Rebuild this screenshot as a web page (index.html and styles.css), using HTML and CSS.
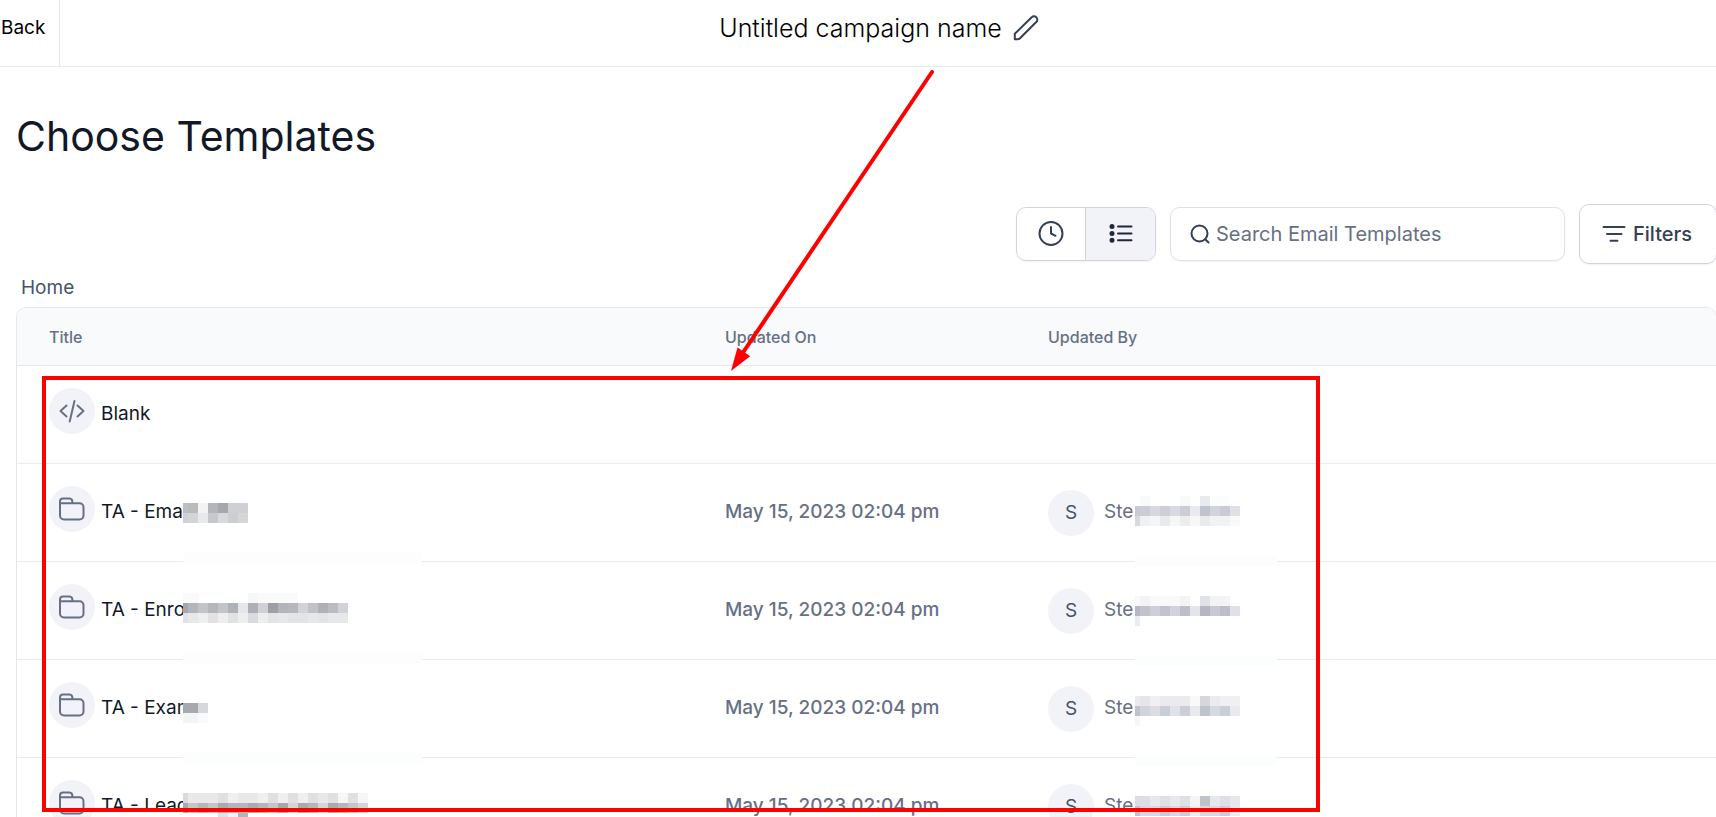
FILE: index.html
```html
<!DOCTYPE html>
<html lang="en">
<head>
<meta charset="utf-8">
<meta name="viewport" content="width=device-width, initial-scale=1">
<title>Choose Templates</title>
<link rel="stylesheet" href="styles.css">
</head>
<body>
<svg class="sprite" aria-hidden="true">
  <symbol id="folder" viewBox="0 0 28 28"><path d="M2 8.300V6.400A3 3 0 0 1 5 3.400h6.600a3 3 0 0 1 2.700 3L14.600 8.300M2 8.300H21.500a4 4 0 0 1 4 4V20.500a4 4 0 0 1-4 4H6a4 4 0 0 1-4-4Z"/></symbol>
</svg>

<header class="topbar">
  <a class="back" href="#">Back</a>
  <div class="campaign">
    <span>Untitled campaign name</span>
    <button class="edit" type="button" aria-label="Edit campaign name">
      <svg width="26" height="26" viewBox="0 0 26 26"><path d="M1.800 24.200V18.700L18.700 2.300a3 3 0 0 1 4.600 0a3.200 3.200 0 0 1 0 4.700L7 23.200Q6 24.200 4.600 24.200Z"/></svg>
    </button>
  </div>
</header>

<main class="page">
  <h1>Choose Templates</h1>

  <div class="toolbar">
    <div class="toggle">
      <button type="button" aria-label="Recent">
        <svg width="26" height="26" viewBox="0 0 26 26"><circle cx="13" cy="12.500" r="11.500"/><path d="M13 6V12.500L17.500 14.800"/></svg>
      </button>
      <button class="active" type="button" aria-label="List">
        <svg width="24" height="20" viewBox="0 0 24 20"><path d="M9 2.500H22.500M9 9.500H22.500M9 16.200H22.500"/><path class="dots" d="M3 2.500h.01M3 9.500h.01M3 16.200h.01"/></svg>
      </button>
    </div>
    <label class="search">
      <svg width="20" height="20" viewBox="0 0 20 20"><circle cx="9.500" cy="9.500" r="8"/><path d="M15.200 15.200L18.500 18.500"/></svg>
      <input type="search" placeholder="Search Email Templates" aria-label="Search Email Templates">
    </label>
    <button class="filters" type="button">
      <svg width="24" height="18" viewBox="0 0 24 18"><path d="M1.500 2H22.500M5 9H19.500M8.500 15.700H15.500"/></svg>
      Filters
    </button>
  </div>

  <nav class="crumbs"><a href="#">Home</a></nav>

  <table class="templates">
    <thead>
      <tr><th class="col-title">Title</th><th class="col-date">Updated On</th><th>Updated By</th></tr>
    </thead>
    <tbody>
      <tr>
        <td><div class="item"><span class="icon"><svg width="28" height="28" viewBox="0 0 28 28"><path d="M8.500 8.500L2.500 14L8.500 19.500M19.500 8.500L25.500 14L19.500 19.500M16.500 4L11.700 24.500"/></svg></span><span class="name">Blank</span></div></td>
        <td></td><td></td>
      </tr>
      <tr>
        <td><div class="item"><span class="icon"><svg width="28" height="28"><use href="#folder"/></svg></span><span class="name">TA - Ema</span></div>
          <svg class="mosaic" width="239" height="106"><path class="band" d="M0 94H239"/>
            <path stroke="#bdbec1" d="M0 44h5"/><path stroke="#b9babe" d="M5 44h10"/><path stroke="#f3f3f3" d="M15 44h10"/><path stroke="#b2b5ba" d="M25 44h10"/><path stroke="#a4a7ac" d="M35 44h10"/><path stroke="#cfd0d3" d="M45 44h20"/>
            <path stroke="#cfd0d3" d="M0 54h5"/><path stroke="#d3d4d8" d="M5 54h10"/><path stroke="#e8e9ec" d="M15 54h10"/><path stroke="#c7c8cc" d="M25 54h10"/><path stroke="#d8d9df" d="M35 54h10"/><path stroke="#cdced1" d="M45 54h10"/><path stroke="#d5d6d8" d="M55 54h10"/>
          </svg></td>
        <td>May 15, 2023 02:04 pm</td>
        <td><div class="user"><span class="avatar">S</span><span class="who">Ste</span></div>
          <svg class="mosaic right" width="142" height="106"><path class="band" d="M0 97H142"/>
            <path stroke="#f9f9fa" d="M5 37h10M45 37h10"/><path stroke="#e9eaee" d="M65 37h10"/><path stroke="#fbfcfc" d="M75 37h20"/>
            <path stroke="#c8cbd3" d="M0 47h5"/><path stroke="#cacdd5" d="M5 47h10M45 47h10"/><path stroke="#d5d8de" d="M15 47h10"/><path stroke="#cccfd6" d="M25 47h10"/><path stroke="#d7dae0" d="M35 47h10"/><path stroke="#e9eaef" d="M55 47h10"/><path stroke="#bfc3cc" d="M65 47h10"/><path stroke="#d1d4dc" d="M75 47h10"/><path stroke="#c8ccd5" d="M85 47h10"/><path stroke="#e0e1e6" d="M95 47h10"/>
            <path stroke="#d8d9df" d="M0 57h5"/><path stroke="#f0f1f3" d="M5 57h10"/><path stroke="#f5f5f7" d="M15 57h10"/><path stroke="#e9eaec" d="M25 57h10M65 57h10"/><path stroke="#f7f7f8" d="M35 57h10M55 57h10"/><path stroke="#ededef" d="M45 57h10"/><path stroke="#f2f2f5" d="M75 57h20"/><path stroke="#f9f9fa" d="M95 57h10"/>
          </svg></td>
      </tr>
      <tr>
        <td><div class="item"><span class="icon"><svg width="28" height="28"><use href="#folder"/></svg></span><span class="name">TA - Enro</span></div>
          <svg class="mosaic" width="239" height="106"><path class="band" d="M0 96H239"/>
            <path stroke="#fafafa" d="M0 36h15M75 36h40"/><path stroke="#f6f7f7" d="M65 36h10"/>
            <path stroke="#a5a7ae" d="M0 46h5"/><path stroke="#b2b5ba" d="M5 46h10"/><path stroke="#c1c3c8" d="M15 46h10"/><path stroke="#b5b6bc" d="M25 46h10"/><path stroke="#c1c4c8" d="M35 46h10"/><path stroke="#b0b2b9" d="M45 46h10"/><path stroke="#e5e6ea" d="M55 46h10"/><path stroke="#afb0b7" d="M65 46h10"/><path stroke="#d0d1d6" d="M75 46h10"/><path stroke="#9c9fa8" d="M85 46h10"/><path stroke="#b1b4b9" d="M95 46h10"/><path stroke="#b7b8be" d="M105 46h10"/><path stroke="#d1d3d8" d="M115 46h10"/><path stroke="#c0c2c7" d="M125 46h10"/><path stroke="#b0b1b7" d="M135 46h10"/><path stroke="#b9bbc1" d="M145 46h10"/><path stroke="#d1d2d8" d="M155 46h10"/>
            <path stroke="#e2e2e5" d="M0 56h5M25 56h10M45 56h10"/><path stroke="#e7e8ea" d="M5 56h10M95 56h10M125 56h10M145 56h20"/><path stroke="#eeeeef" d="M15 56h10M35 56h10M55 56h10M75 56h10"/><path stroke="#dadbde" d="M65 56h10"/><path stroke="#e3e4e6" d="M85 56h10M105 56h20M135 56h10"/>
          </svg></td>
        <td>May 15, 2023 02:04 pm</td>
        <td><div class="user"><span class="avatar">S</span><span class="who">Ste</span></div>
          <svg class="mosaic right" width="142" height="106"><path class="band" d="M0 99H142"/>
            <path stroke="#f9f9fa" d="M0 39h5M15 39h30"/><path stroke="#f3f3f5" d="M5 39h10M45 39h10M75 39h20"/><path stroke="#e1e2e7" d="M65 39h10"/>
            <path stroke="#b5b9c4" d="M0 49h5"/><path stroke="#c1c4cd" d="M5 49h10"/><path stroke="#cdd0d7" d="M15 49h10"/><path stroke="#c1c4ce" d="M25 49h10"/><path stroke="#d0d3db" d="M35 49h10"/><path stroke="#bbbfc9" d="M45 49h10M85 49h10"/><path stroke="#e3e5ea" d="M55 49h10"/><path stroke="#b3b7c3" d="M65 49h10"/><path stroke="#c7cad3" d="M75 49h10"/><path stroke="#dfe1e6" d="M95 49h10"/><path stroke="#ebecef" d="M0 59h5"/>
          </svg></td>
      </tr>
      <tr>
        <td><div class="item"><span class="icon"><svg width="28" height="28"><use href="#folder"/></svg></span><span class="name">TA - Exam</span></div>
          <svg class="mosaic" width="239" height="106"><path class="blank" d="M0 48H40"/><path class="band" d="M0 98H239"/>
            <path stroke="#a8a9b0" d="M0 48h15"/><path stroke="#d7d8dc" d="M15 48h10"/><path stroke="#f3f4f4" d="M0 58h15"/><path stroke="#fafafa" d="M15 58h10"/>
          </svg></td>
        <td>May 15, 2023 02:04 pm</td>
        <td><div class="user"><span class="avatar">S</span><span class="who">Ste</span></div>
          <svg class="mosaic right" width="142" height="106"><path class="band" d="M0 101H142"/>
            <path stroke="#ebebef" d="M0 41h5M25 41h30M75 41h10"/><path stroke="#e5e6ea" d="M5 41h10"/><path stroke="#f0f0f3" d="M15 41h10M85 41h20"/><path stroke="#f8f9f9" d="M55 41h10"/><path stroke="#d6d7dd" d="M65 41h10"/>
            <path stroke="#bec3cc" d="M0 51h5M65 51h10"/><path stroke="#d1d4dc" d="M5 51h10"/><path stroke="#dbdde3" d="M15 51h10"/><path stroke="#caced6" d="M25 51h10M45 51h10M85 51h10"/><path stroke="#e1e2e7" d="M35 51h10"/><path stroke="#e9eaef" d="M55 51h10M95 51h10"/><path stroke="#d7d9e0" d="M75 51h10"/><path stroke="#f7f7f8" d="M0 61h5"/>
          </svg></td>
      </tr>
      <tr>
        <td><div class="item"><span class="icon"><svg width="28" height="28"><use href="#folder"/></svg></span><span class="name">TA - Lead</span></div>
          <svg class="mosaic" width="239" height="90"><path class="blank" d="M0 48H40"/>
            <path stroke="#d9dadc" d="M0 40h5"/><path stroke="#e8e9ea" d="M5 40h30M55 40h20M135 40h10"/><path stroke="#dfe0e2" d="M35 40h10M85 40h10M105 40h10M125 40h10M145 40h10M165 40h10"/><path stroke="#efeff0" d="M45 40h10M75 40h10M95 40h10M115 40h10"/><path stroke="#f5f7f7" d="M155 40h10M175 40h10"/>
            <path stroke="#a6a8ae" d="M0 50h5M95 50h10"/><path stroke="#c3c5c9" d="M5 50h10M25 50h10M85 50h10M165 50h10"/><path stroke="#b5b6bb" d="M15 50h10M45 50h20M75 50h10M125 50h10M155 50h10"/><path stroke="#a9abb1" d="M35 50h10M65 50h10M115 50h10M145 50h10"/><path stroke="#d4d5d8" d="M105 50h10M135 50h10M175 50h10"/>
            <path stroke="#e2e2e4" d="M35 60h10"/><path stroke="#f2f2f3" d="M45 60h10"/><path stroke="#b5b6bb" d="M55 60h10"/>
          </svg></td>
        <td>May 15, 2023 02:04 pm</td>
        <td><div class="user"><span class="avatar">S</span><span class="who">Ste</span></div>
          <svg class="mosaic right" width="142" height="90">
            <path stroke="#dcdee3" d="M0 43h15"/><path stroke="#e7e8ec" d="M15 43h10M35 43h10M75 43h10M95 43h10"/><path stroke="#dfe0e5" d="M25 43h10M45 43h10M85 43h10"/><path stroke="#f2f4f6" d="M55 43h10"/><path stroke="#bdc2cb" d="M65 43h10"/>
            <path stroke="#bec3cc" d="M0 53h5"/><path stroke="#d7d9e0" d="M5 53h20M35 53h10M65 53h20"/><path stroke="#cacdd5" d="M25 53h10M45 53h10M85 53h10"/><path stroke="#ebecef" d="M55 53h10M95 53h10"/>
          </svg></td>
      </tr>
    </tbody>
  </table>
</main>

<svg class="annotation" width="1340" height="817" aria-hidden="true">
  <rect x="44" y="378" width="1274" height="432"/>
  <path d="M932 72L742 354"/>
  <path class="head" d="M731 371L737.500 347.500L750.200 356.300Z"/>
</svg>
</body>
</html>
```
FILE: styles.css
```css
* { box-sizing: border-box; }

body {
  position: relative;
  height: 100vh;
  margin: 0;
  overflow: hidden;
  background: #fff;
  color: #111827;
  font: 400 19px/24px Inter, sans-serif;
}

a { color: inherit; text-decoration: none; }

button {
  padding: 0;
  border: 0;
  background: none;
  color: inherit;
  font: inherit;
}

svg {
  display: block;
  flex: none;
  fill: none;
  stroke: currentColor;
  stroke-width: 2;
  stroke-linecap: round;
  stroke-linejoin: round;
}

.sprite { display: none; }

.topbar {
  display: flex;
  height: 67px;
  padding-bottom: 10px;
  border-bottom: 1px solid #eaebee;
  color: #000;
}

.back {
  width: 60px;
  height: 66px;
  padding: 16px 0 0 1px;
  border-right: 1px solid #e4e5ea;
}

.campaign {
  display: flex;
  flex: 1;
  align-items: center;
  justify-content: center;
  gap: 11px;
  padding-right: 18px;
  font-size: 25px;
  font-weight: 300;
  line-height: 32px;
}

.edit { color: #344054; }

.page { margin: 0 -1px 0 16px; }

h1 {
  margin: 0;
  padding-top: 45px;
  font-size: 41px;
  font-weight: 400;
  line-height: 48px;
}

.toolbar {
  display: flex;
  align-items: center;
  justify-content: flex-end;
  gap: 14px;
  margin-top: 44px;
  color: #344054;
}

.toggle {
  display: flex;
  width: 140px;
  height: 54px;
  overflow: hidden;
  border: 1px solid #d0d5dd;
  border-radius: 10px;
  box-shadow: 0 1px 2px #1018280d;
}

.toggle button {
  display: grid;
  flex: 1;
  place-items: center;
}

.toggle .active {
  border-left: 1px solid #d0d5dd;
  background: #f2f3f8;
  color: #1d2939;
}

.toggle .dots { stroke-width: 5; }

.search {
  display: flex;
  align-items: center;
  gap: 6px;
  width: 395px;
  height: 54px;
  padding: 0 19px;
  border: 1px solid #e0e1e6;
  border-radius: 10px;
  box-shadow: 0 1px 2px #1018280d;
}

.search input {
  flex: 1;
  min-width: 0;
  padding: 0;
  border: 0;
  outline: 0;
  background: none;
  font: inherit;
  font-size: 20px;
}

.search input::placeholder { color: #667085; }

.filters {
  display: flex;
  align-items: center;
  gap: 7px;
  height: 60px;
  padding: 0 24px 0 22px;
  border: 1px solid #d0d5dd;
  border-radius: 10px;
  box-shadow: 0 1px 2px #1018280d;
  font-size: 20px;
  font-weight: 500;
}

.crumbs {
  padding: 12px 5px 7px;
  color: #475467;
}

.templates {
  width: 100%;
  border: 1px solid #e6e7ec;
  border-radius: 10px 10px 0 0;
  border-spacing: 0;
  table-layout: fixed;
  color: #667085;
}

.col-title { width: 676px; }
.col-date { width: 323px; }

th {
  height: 58px;
  padding: 0 32px;
  border-bottom: 1px solid #e6e7ec;
  background: #f9fafc;
  font-size: 16px;
  font-weight: 500;
  text-align: left;
}

th:first-child { border-top-left-radius: 9px; }
th:last-child { border-top-right-radius: 9px; }

td {
  position: relative;
  height: 98px;
  padding: 0 32px 1px;
  border-bottom: 1px solid #eaebee;
  font-weight: 500;
}

.item,
.user {
  display: flex;
  align-items: center;
}

.item {
  gap: 6px;
  padding-bottom: 6px;
  color: #101828;
  font-weight: 400;
}

.icon,
.avatar {
  display: grid;
  flex: none;
  width: 46px;
  height: 46px;
  place-items: center;
  border-radius: 50%;
  background: #f2f3f8;
}

.icon { color: #667085; }

.name {
  padding-top: 6px;
  white-space: nowrap;
}

.user {
  gap: 10px;
  padding-top: 2px;
  font-weight: 400;
}

.avatar { color: #475467; }

.who {
  padding-bottom: 2px;
}

.mosaic {
  position: absolute;
  z-index: 1;
  top: 0;
  left: 166px;
  stroke-width: 10;
  stroke-linecap: butt;
  shape-rendering: crispEdges;
}

.mosaic.right { left: 119px; }

.blank {
  stroke: #fff;
  stroke-width: 30;
}

.band { stroke: #fcfdfd; }

.annotation {
  position: absolute;
  z-index: 2;
  top: 0;
  left: 0;
  color: #f00;
  stroke-width: 4;
  stroke-linejoin: miter;
  pointer-events: none;
}

.annotation .head {
  fill: currentColor;
  stroke: none;
}
```
